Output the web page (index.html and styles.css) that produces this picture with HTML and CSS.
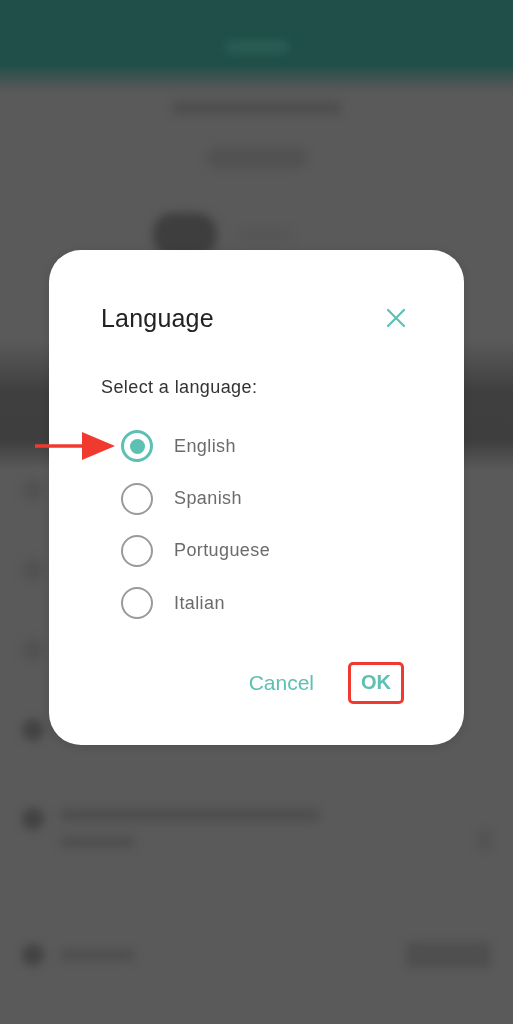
FILE: index.html
```
<!DOCTYPE html>
<html lang="en">
<head>
    <meta charset="UTF-8">
    <meta name="viewport" content="width=device-width, initial-scale=1.0">
    <title>Language</title>
    <link rel="stylesheet" href="styles.css">
</head>
<body>

    <!-- page behind the dialog, dimmed and blurred -->
    <div class="app">
        <header class="app-header">
            <span class="blob header-title"></span>
        </header>
        <div class="profile">
            <span class="blob profile-name"></span>
            <span class="blob profile-pill"></span>
            <div class="profile-row">
                <span class="avatar"></span>
                <span class="blob profile-meta"></span>
            </div>
        </div>
        <div class="list">
            <div class="list-row"><span class="dot"></span><span class="blob line-md"></span></div>
            <div class="list-row"><span class="dot"></span><span class="blob line-md"></span></div>
            <div class="list-row"><span class="dot"></span><span class="blob line-md"></span></div>
            <div class="list-row"><span class="dot dark"></span><span class="blob line-lg"></span></div>
            <div class="list-row tall">
                <span class="dot dark"></span>
                <div class="lines">
                    <span class="blob line-xl"></span>
                    <span class="blob line-sm"></span>
                </div>
                <span class="chevron"></span>
            </div>
            <div class="list-row last">
                <span class="dot dark"></span>
                <span class="blob line-sm"></span>
                <span class="blob row-button"></span>
            </div>
        </div>
    </div>

    <!-- language dialog -->
    <div class="overlay">
        <div class="dialog">
            <div class="dialog-head">
                <h2>Language</h2>
                <button class="close-btn" aria-label="Close">
                    <svg width="20" height="20" viewBox="0 0 20 20">
                        <path d="M2 2 L18 18 M18 2 L2 18" stroke="#5cc0b2" stroke-width="2.2" stroke-linecap="round" fill="none"/>
                    </svg>
                </button>
            </div>
            <p class="dialog-hint">Select a language:</p>

            <div class="options">
                <label class="option">
                    <span class="radio checked"></span>
                    <span class="option-label">English</span>
                    <!-- annotation arrow -->
                    <svg class="pointer" width="80" height="30" viewBox="0 0 80 30">
                        <path d="M0 15 H50" stroke="#f03a30" stroke-width="3.5"/>
                        <polygon points="47,1 80,15 47,29" fill="#f03a30"/>
                    </svg>
                </label>
                <label class="option">
                    <span class="radio"></span>
                    <span class="option-label">Spanish</span>
                </label>
                <label class="option">
                    <span class="radio"></span>
                    <span class="option-label">Portuguese</span>
                </label>
                <label class="option">
                    <span class="radio"></span>
                    <span class="option-label">Italian</span>
                </label>
            </div>

            <div class="actions">
                <button class="text-btn">Cancel</button>
                <button class="text-btn ok-btn">OK</button>
            </div>
        </div>
    </div>

</body>
</html>
```

FILE: styles.css
```
* {
    margin: 0;
    padding: 0;
    box-sizing: border-box;
    font-family: 'Liberation Sans', Arial, sans-serif;
}

body {
    width: 513px;
    height: 1024px;
    background: #5a5a5a;
    overflow: hidden;
}

/* 背景页面（变暗+模糊） */
.app {
    height: 1024px;
    background: linear-gradient(to bottom,
        #1f4f48 0, #1f4f48 64px, #545757 88px, #5a5a5a 96px,
        #5a5a5a 340px, #3f3f3f 392px, #3e3e3e 440px, #5a5a5a 470px, #5a5a5a 100%);
}

.app-header {
    height: 76px;
    display: flex;
    justify-content: center;
    padding-top: 40px;
}

.blob {
    display: block;
    background: #4f4f4f;
    border-radius: 6px;
    filter: blur(4px);
}

.header-title {
    width: 64px;
    height: 14px;
    background: #2b5b55;
}

.profile {
    display: flex;
    flex-direction: column;
    align-items: center;
    padding-top: 25px;
}

.profile-name {
    width: 170px;
    height: 14px;
}

.profile-pill {
    width: 100px;
    height: 22px;
    margin-top: 32px;
    border-radius: 11px;
    background: #525252;
}

.profile-row {
    align-self: flex-start;
    display: flex;
    align-items: center;
    gap: 20px;
    margin-top: 44px;
    margin-left: 153px;
}

.avatar {
    width: 64px;
    height: 44px;
    border-radius: 20px;
    background: #3e3e3e;
    filter: blur(5px);
}

.profile-meta {
    width: 55px;
    height: 10px;
    background: #555;
}

.list {
    margin-top: 193px;
}

.list-row {
    display: flex;
    align-items: center;
    gap: 16px;
    height: 80px;
    padding: 0 22px;
}

.list-row.tall {
    height: 110px;
    align-items: flex-start;
    padding-top: 38px;
}

.list-row.last {
    height: 150px;
}

.dot {
    width: 22px;
    height: 22px;
    border-radius: 50%;
    background: #525252;
    filter: blur(4px);
}

.dot.dark {
    background: #434343;
}

.lines {
    display: flex;
    flex-direction: column;
    gap: 14px;
}

.line-sm { width: 75px; height: 12px; }
.line-md { width: 120px; height: 12px; background: #565656; }
.line-lg { width: 200px; height: 12px; background: #565656; }
.line-xl { width: 260px; height: 14px; }

.chevron {
    width: 12px;
    height: 20px;
    margin-left: auto;
    margin-top: 22px;
    background: #535353;
    filter: blur(4px);
}

.row-button {
    width: 85px;
    height: 26px;
    margin-left: auto;
}

/* 对话框遮罩 */
.overlay {
    position: fixed;
    top: 0;
    left: 0;
    right: 0;
    bottom: 0;
    display: flex;
    justify-content: center;
    align-items: flex-start;
    padding-top: 250px;
}

.dialog {
    width: 415px;
    height: 495px;
    background: #fff;
    border-radius: 32px;
    padding: 48px 52px 0 52px;
    box-shadow: 0 2px 10px rgba(0, 0, 0, 0.12);
}

.dialog-head {
    display: flex;
    justify-content: space-between;
    align-items: center;
    height: 40px;
}

.dialog-head h2 {
    font-size: 25px;
    font-weight: 400;
    color: #222;
    letter-spacing: 0.2px;
}

.close-btn {
    width: 32px;
    height: 32px;
    display: flex;
    justify-content: center;
    align-items: center;
    background: none;
    border: none;
}

.dialog-hint {
    margin-top: 38px;
    font-size: 18px;
    line-height: 22px;
    letter-spacing: 0.4px;
    color: #333;
}

.options {
    margin-top: 22px;
}

.option {
    position: relative;
    display: flex;
    align-items: center;
    height: 52.4px;
    padding-left: 20px;
    gap: 21px;
}

.radio {
    width: 32px;
    height: 32px;
    border-radius: 50%;
    border: 2.5px solid #9a9a9a;
    display: flex;
    justify-content: center;
    align-items: center;
}

.radio.checked {
    border: 3px solid #5cc0b2;
}

.radio.checked::after {
    content: "";
    width: 15px;
    height: 15px;
    border-radius: 50%;
    background: #5cc0b2;
}

.option-label {
    font-size: 18px;
    letter-spacing: 0.4px;
    color: #6b6b6b;
}

.pointer {
    position: absolute;
    left: -66px;
    top: 11px;
}

.actions {
    display: flex;
    justify-content: flex-end;
    align-items: center;
    gap: 34px;
    margin-top: 32px;
    margin-right: 8px;
}

.text-btn {
    background: none;
    border: none;
    font-size: 21px;
    color: #5cc0b2;
}

.ok-btn {
    height: 42px;
    padding: 0 10px;
    border: 3px solid #f03a30;
    border-radius: 5px;
    font-size: 20px;
    font-weight: 600;
}
```
